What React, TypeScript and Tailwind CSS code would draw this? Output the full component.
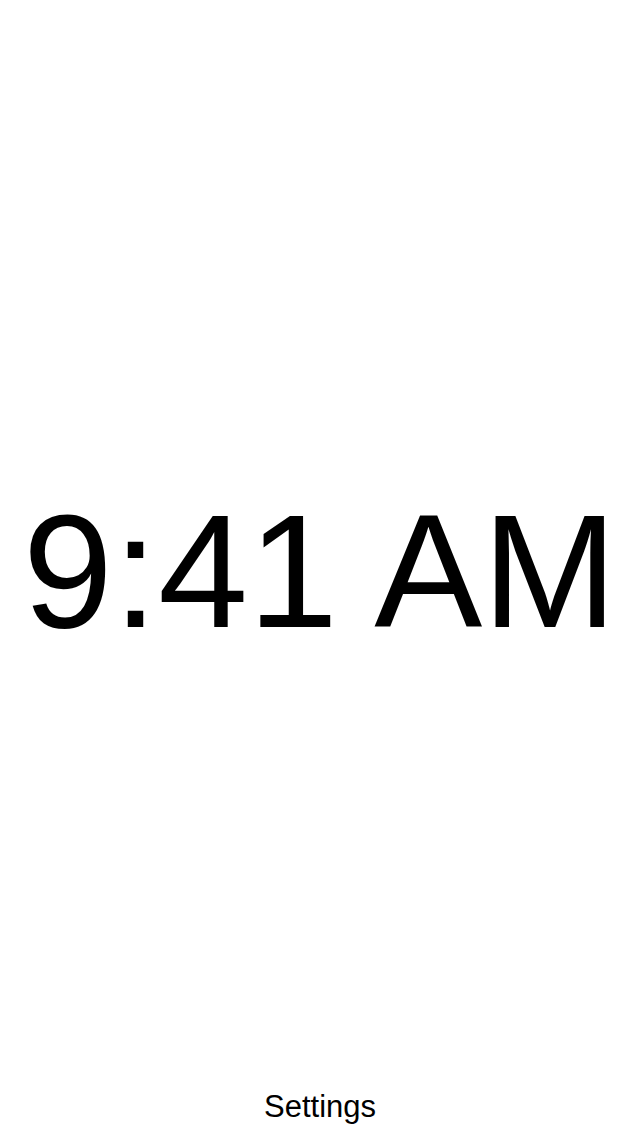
export default function App() {
  return (
    <div className="flex h-[1136px] w-[640px] flex-col bg-white text-black" style={{ fontFamily: '"Liberation Sans", Arial, sans-serif' }}>
      <div className="flex flex-1 items-center justify-center pt-[54px]">
        <span className="text-[162px] leading-none whitespace-nowrap">9:41 AM</span>
      </div>
      <div className="flex justify-center pb-[9px]">
        <span className="text-[31px] leading-[40px]">Settings</span>
      </div>
    </div>
  );
}
